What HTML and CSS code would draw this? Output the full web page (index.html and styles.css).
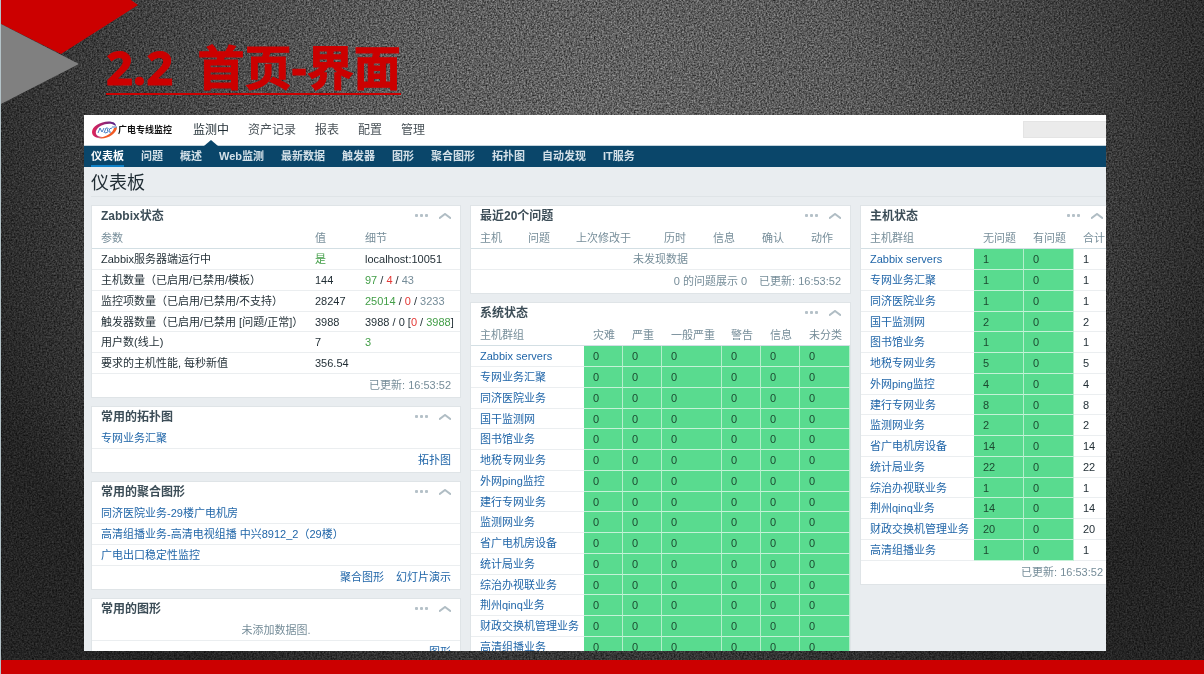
FILE: index.html
```html
<!DOCTYPE html>
<html lang="zh-CN">
<head>
<meta charset="utf-8">
<title>2.2 首页-界面</title>
<link rel="stylesheet" href="styles.css">
</head>
<body>
<div class="slide">
  <svg class="texture" aria-hidden="true" width="100%" height="100%">
    <filter id="grain" x="0" y="0" width="100%" height="100%" color-interpolation-filters="sRGB">
      <feTurbulence type="fractalNoise" baseFrequency="0.6" numOctaves="2" seed="4"/>
      <feColorMatrix values="0.8 0 0 0 0.05  0.8 0 0 0 0.05  0.8 0 0 0 0.05  0 0 0 0 1"/>
    </filter>
    <rect width="100%" height="100%" filter="url(#grain)"/>
  </svg>
  <svg class="corner" aria-hidden="true" width="140" height="106" viewBox="0 0 140 106">
    <path d="M0 0H130L137 5L60 54L0 24Z" fill="#c00"/>
    <path d="M0 24L78 64L0 104Z" fill="#808080"/>
  </svg>
  <h1 class="slide-title"><span>2.2  首页-界面</span></h1>

  <div class="window">
    <header class="topbar">
      <a class="logo" href="#">
        <svg width="26" height="18" viewBox="0 0 26 18" aria-hidden="true">
          <defs><linearGradient id="ring" x1="0" x2="1" y1="0" y2="0"><stop offset="0" stop-color="#e0245a"/><stop offset="1" stop-color="#53268c"/></linearGradient></defs>
          <path d="M20 1C11-1 0 5 0 11C0 16 6 18 12 16C6 16 3 14 4 10C6 5 13 2 20 3L24 5C24 3 22 1 20 1Z" fill="url(#ring)"/>
          <path d="M6 17C14 19 25 13 25 6L22 7C21 12 14 16 6 17Z" fill="#f15a24"/>
          <path d="M6 12L8 7L10 11L12 7M12 12L14 7Q18 7 15 9Q18 11 13 12M20 7Q17 7 17 10Q17 12 19 11M20 6H25" fill="none" stroke="#4a7fc4" stroke-width="1"/>
        </svg>
        <span>广电专线监控</span>
      </a>
      <nav class="main-nav">
        <a class="active" href="#">监测中</a><a href="#">资产记录</a><a href="#">报表</a><a href="#">配置</a><a href="#">管理</a>
      </nav>
      <input class="search" type="text" aria-label="搜索">
    </header>
    <nav class="sub-nav">
      <a class="active" href="#">仪表板</a><a href="#">问题</a><a href="#">概述</a><a href="#">Web监测</a><a href="#">最新数据</a><a href="#">触发器</a><a href="#">图形</a><a href="#">聚合图形</a><a href="#">拓扑图</a><a href="#">自动发现</a><a href="#">IT服务</a>
    </nav>
    <main class="page">
      <h2 class="page-title">仪表板</h2>
      <div class="dashboard">
        <div class="column">
          <section class="widget">
            <div class="widget-head"><h3>Zabbix状态</h3><button class="dots" aria-label="更多"><i></i><i></i><i></i></button><button class="fold" aria-label="折叠"><svg width="12" height="6" viewBox="0 0 12 6"><path d="M0 5.500L6 1L12 5.500"/></svg></button></div>
            <table>
              <colgroup><col class="w-param"><col class="w-value"><col></colgroup>
              <thead><tr><th>参数</th><th>值</th><th>细节</th></tr></thead>
              <tbody>
                <tr><td>Zabbix服务器端运行中</td><td class="ok">是</td><td>localhost:10051</td></tr>
                <tr><td>主机数量（已启用/已禁用/模板）</td><td>144</td><td><b class="ok">97</b> / <b class="bad">4</b> / <b class="muted">43</b></td></tr>
                <tr><td>监控项数量（已启用/已禁用/不支持）</td><td>28247</td><td><b class="ok">25014</b> / <b class="bad">0</b> / <b class="muted">3233</b></td></tr>
                <tr><td>触发器数量（已启用/已禁用 [问题/正常]）</td><td>3988</td><td>3988 / 0 [<b class="bad">0</b> / <b class="ok">3988</b>]</td></tr>
                <tr><td>用户数(线上)</td><td>7</td><td class="ok">3</td></tr>
                <tr><td>要求的主机性能, 每秒新值</td><td>356.54</td><td></td></tr>
              </tbody>
            </table>
            <div class="widget-foot"><span>已更新: 16:53:52</span></div>
          </section>
          <section class="widget">
            <div class="widget-head"><h3>常用的拓扑图</h3><button class="dots" aria-label="更多"><i></i><i></i><i></i></button><button class="fold" aria-label="折叠"><svg width="12" height="6" viewBox="0 0 12 6"><path d="M0 5.500L6 1L12 5.500"/></svg></button></div>
            <ul class="links"><li><a href="#">专网业务汇聚</a></li></ul>
            <div class="widget-foot"><a href="#">拓扑图</a></div>
          </section>
          <section class="widget">
            <div class="widget-head"><h3>常用的聚合图形</h3><button class="dots" aria-label="更多"><i></i><i></i><i></i></button><button class="fold" aria-label="折叠"><svg width="12" height="6" viewBox="0 0 12 6"><path d="M0 5.500L6 1L12 5.500"/></svg></button></div>
            <ul class="links"><li><a href="#">同济医院业务-29楼广电机房</a></li><li><a href="#">高清组播业务-高清电视组播 中兴8912_2（29楼）</a></li><li><a href="#">广电出口稳定性监控</a></li></ul>
            <div class="widget-foot"><a href="#">聚合图形</a><a href="#">幻灯片演示</a></div>
          </section>
          <section class="widget">
            <div class="widget-head"><h3>常用的图形</h3><button class="dots" aria-label="更多"><i></i><i></i><i></i></button><button class="fold" aria-label="折叠"><svg width="12" height="6" viewBox="0 0 12 6"><path d="M0 5.500L6 1L12 5.500"/></svg></button></div>
            <ul class="links"><li class="empty">未添加数据图.</li></ul>
            <div class="widget-foot"><a href="#">图形</a></div>
          </section>
        </div>
        <div class="column">
          <section class="widget">
            <div class="widget-head"><h3>最近20个问题</h3><button class="dots" aria-label="更多"><i></i><i></i><i></i></button><button class="fold" aria-label="折叠"><svg width="12" height="6" viewBox="0 0 12 6"><path d="M0 5.500L6 1L12 5.500"/></svg></button></div>
            <table>
              <colgroup><col class="w-issue"><col class="w-issue"><col class="w-changed"><col class="w-detail"><col class="w-detail"><col class="w-detail"><col></colgroup>
              <thead><tr><th>主机</th><th>问题</th><th>上次修改于</th><th>历时</th><th>信息</th><th>确认</th><th>动作</th></tr></thead>
              <tbody><tr><td class="empty" colspan="7">未发现数据</td></tr></tbody>
            </table>
            <div class="widget-foot"><span>0 的问题展示 0</span><span>已更新: 16:53:52</span></div>
          </section>
          <section class="widget">
            <div class="widget-head"><h3>系统状态</h3><button class="dots" aria-label="更多"><i></i><i></i><i></i></button><button class="fold" aria-label="折叠"><svg width="12" height="6" viewBox="0 0 12 6"><path d="M0 5.500L6 1L12 5.500"/></svg></button></div>
            <table class="status">
              <colgroup><col class="w-group"><col class="w-sev"><col class="w-sev"><col class="w-average"><col class="w-sev"><col class="w-sev"><col></colgroup>
              <thead><tr><th>主机群组</th><th>灾难</th><th>严重</th><th>一般严重</th><th>警告</th><th>信息</th><th>未分类</th></tr></thead>
              <tbody id="system-rows"></tbody>
            </table>
          </section>
        </div>
        <div class="column">
          <section class="widget">
            <div class="widget-head"><h3>主机状态</h3><button class="dots" aria-label="更多"><i></i><i></i><i></i></button><button class="fold" aria-label="折叠"><svg width="12" height="6" viewBox="0 0 12 6"><path d="M0 5.500L6 1L12 5.500"/></svg></button></div>
            <table class="status">
              <colgroup><col class="w-group"><col class="w-count"><col class="w-count"><col></colgroup>
              <thead><tr><th>主机群组</th><th>无问题</th><th>有问题</th><th>合计</th></tr></thead>
              <tbody id="host-rows"></tbody>
            </table>
            <div class="widget-foot"><span>已更新: 16:53:52</span></div>
          </section>
        </div>
      </div>
    </main>
  </div>
  <div class="slide-foot"></div>
</div>
<script src="rows.js"></script>
</body>
</html>
```
FILE: rows.js
```js
const groups = [
  ["Zabbix servers", 1], ["专网业务汇聚", 1], ["同济医院业务", 1], ["国干监测网", 2],
  ["图书馆业务", 1], ["地税专网业务", 5], ["外网ping监控", 4], ["建行专网业务", 8],
  ["监测网业务", 2], ["省广电机房设备", 14], ["统计局业务", 22], ["综治办视联业务", 1],
  ["荆州qinq业务", 14], ["财政交换机管理业务", 20], ["高清组播业务", 1]
];
const link = name => `<td><a href="#">${name}</a></td>`;
const good = n => `<td class="good">${n}</td>`;
document.getElementById("system-rows").innerHTML =
  groups.map(([name]) => `<tr>${link(name)}${good(0).repeat(6)}</tr>`).join("");
document.getElementById("host-rows").innerHTML =
  groups.map(([name, n]) => `<tr>${link(name)}${good(n)}${good(0)}<td>${n}</td></tr>`).join("");
```
FILE: styles.css
```css
* { box-sizing: border-box; }
body {
  margin: 0;
  font: 11px/20px "Liberation Sans", "Noto Sans CJK SC", sans-serif;
  color: #1f2c33;
}
a { color: #1f65a8; text-decoration: none; }
h1, h2, h3, ul { margin: 0; padding: 0; }
b { font-weight: 400; }

.slide {
  position: relative;
  isolation: isolate;
  display: flex;
  flex-direction: column;
  height: 100vh;
  overflow: hidden;
  border-left: 1px solid #b4c3c8;
  background: radial-gradient(ellipse 56% 100% at 50% 16%, #6e6e6e 0%, #646464 35%, #484848 68%, #333 90%, #282828 100%);
}
.texture {
  position: absolute;
  inset: 0;
  z-index: -1;
  mix-blend-mode: overlay;
}
.corner { position: absolute; top: 0; left: 0; }
.slide-title {
  padding: 33px 0 0 105px;
  height: 115px;
  flex: none;
  font: 700 47px/69px "Open Sans", "Noto Sans CJK SC", sans-serif;
  color: #c00;
  white-space: pre;
  -webkit-text-stroke: 1px #c00;
}
.slide-title span {
  display: inline-block;
  height: 62px;
  border-bottom: 2px solid #c00;
}
.window {
  flex: 1;
  min-height: 0;
  margin: 0 98px 9px 83px;
  overflow: hidden;
  background: #e9edf0;
}
.slide-foot { flex: none; height: 14px; background: #c00; }

.topbar {
  display: flex;
  align-items: center;
  height: 31px;
  padding-left: 8px;
  background: #fff;
  border-bottom: 1px solid #c3d3dc;
}
.logo {
  display: flex;
  align-items: center;
  color: #111;
  font-size: 9px;
  font-weight: 700;
}
.main-nav { display: flex; gap: 19px; margin-left: 21px; font-size: 12px; line-height: 30px; }
.main-nav a { position: relative; color: #4a5359; }
.main-nav .active { color: #1f2c33; }
.main-nav .active::after {
  content: "";
  position: absolute;
  left: 50%;
  bottom: -1px;
  margin-left: -7px;
  border: 7px solid transparent;
  border-top: 0;
  border-bottom: 6px solid #0a466a;
}
.search {
  width: 83px;
  height: 17px;
  margin: 0 0 2px auto;
  border: 1px solid #e4e4e4;
  border-right: 0;
  background: #ebebeb;
}
.sub-nav {
  display: flex;
  gap: 17px;
  height: 21px;
  padding-left: 7px;
  background: #0a466a;
  font-weight: 700;
}
.sub-nav a { color: #d3e0e8; height: 21px; }
.sub-nav .active { color: #fff; border-bottom: 2px solid #0f81c7; }

.page { padding-left: 7px; margin-right: -7px; }
.page-title {
  height: 30px;
  border-bottom: 1px solid #dfe4e7;
  font-size: 18px;
  font-weight: 400;
  line-height: 32px;
}
.dashboard {
  display: grid;
  grid-template-columns: 370fr 381fr 253fr;
  gap: 9px;
  align-items: start;
  padding-top: 8px;
}
.column { display: grid; gap: 8px; }
.widget { background: #fff; border: 1px solid #dfe4e7; }
.widget-head { display: flex; align-items: center; height: 21px; padding: 0 9px 2px; }
.widget-head h3 { flex: 1; font-size: 12px; font-weight: 700; color: #3c4d57; }
.widget-head button { display: flex; padding: 0; border: 0; background: none; }
.widget-head .dots { gap: 2px; margin-right: 11px; }
.dots i { width: 3px; height: 3px; border-radius: 1px; background: #b5c1c8; }
.fold path { fill: none; stroke: #b0bdc4; stroke-width: 2; }

table { width: 100%; table-layout: fixed; border-collapse: separate; border-spacing: 0; }
th, td { height: 21px; padding: 0 0 0 9px; text-align: left; white-space: nowrap; border-bottom: 1px solid #ebeef0; line-height: 18px; }
th { height: 22px; font-weight: 400; color: #768d99; border-bottom: 1px solid #d3dfe4; }
tbody tr:nth-child(4n) td { height: 20px; }
.w-param { width: 214px; }
.w-value { width: 50px; }
.w-issue { width: 48px; }
.w-detail { width: 49px; }
.w-changed { width: 88px; }
.w-group { width: 113px; }
.w-sev { width: 39px; }
.w-average { width: 60px; }
.w-count { width: 50px; }
.good { background: #59db8f; color: #1c4a31; border-right: 1px solid #b4efcb; border-bottom-color: #c4f2d7; }
.ok { color: #429e47; }
.bad { color: #e33734; }
.muted { color: #768d99; }
td.empty, li.empty { text-align: center; padding-left: 0; color: #768d99; }

.links { list-style: none; }
.links li { height: 21px; padding: 0 9px; border-bottom: 1px solid #ebeef0; }
.widget-foot {
  display: flex;
  justify-content: flex-end;
  gap: 12px;
  height: 23px;
  padding: 0 9px;
  line-height: 22px;
  color: #768d99;
}
```
